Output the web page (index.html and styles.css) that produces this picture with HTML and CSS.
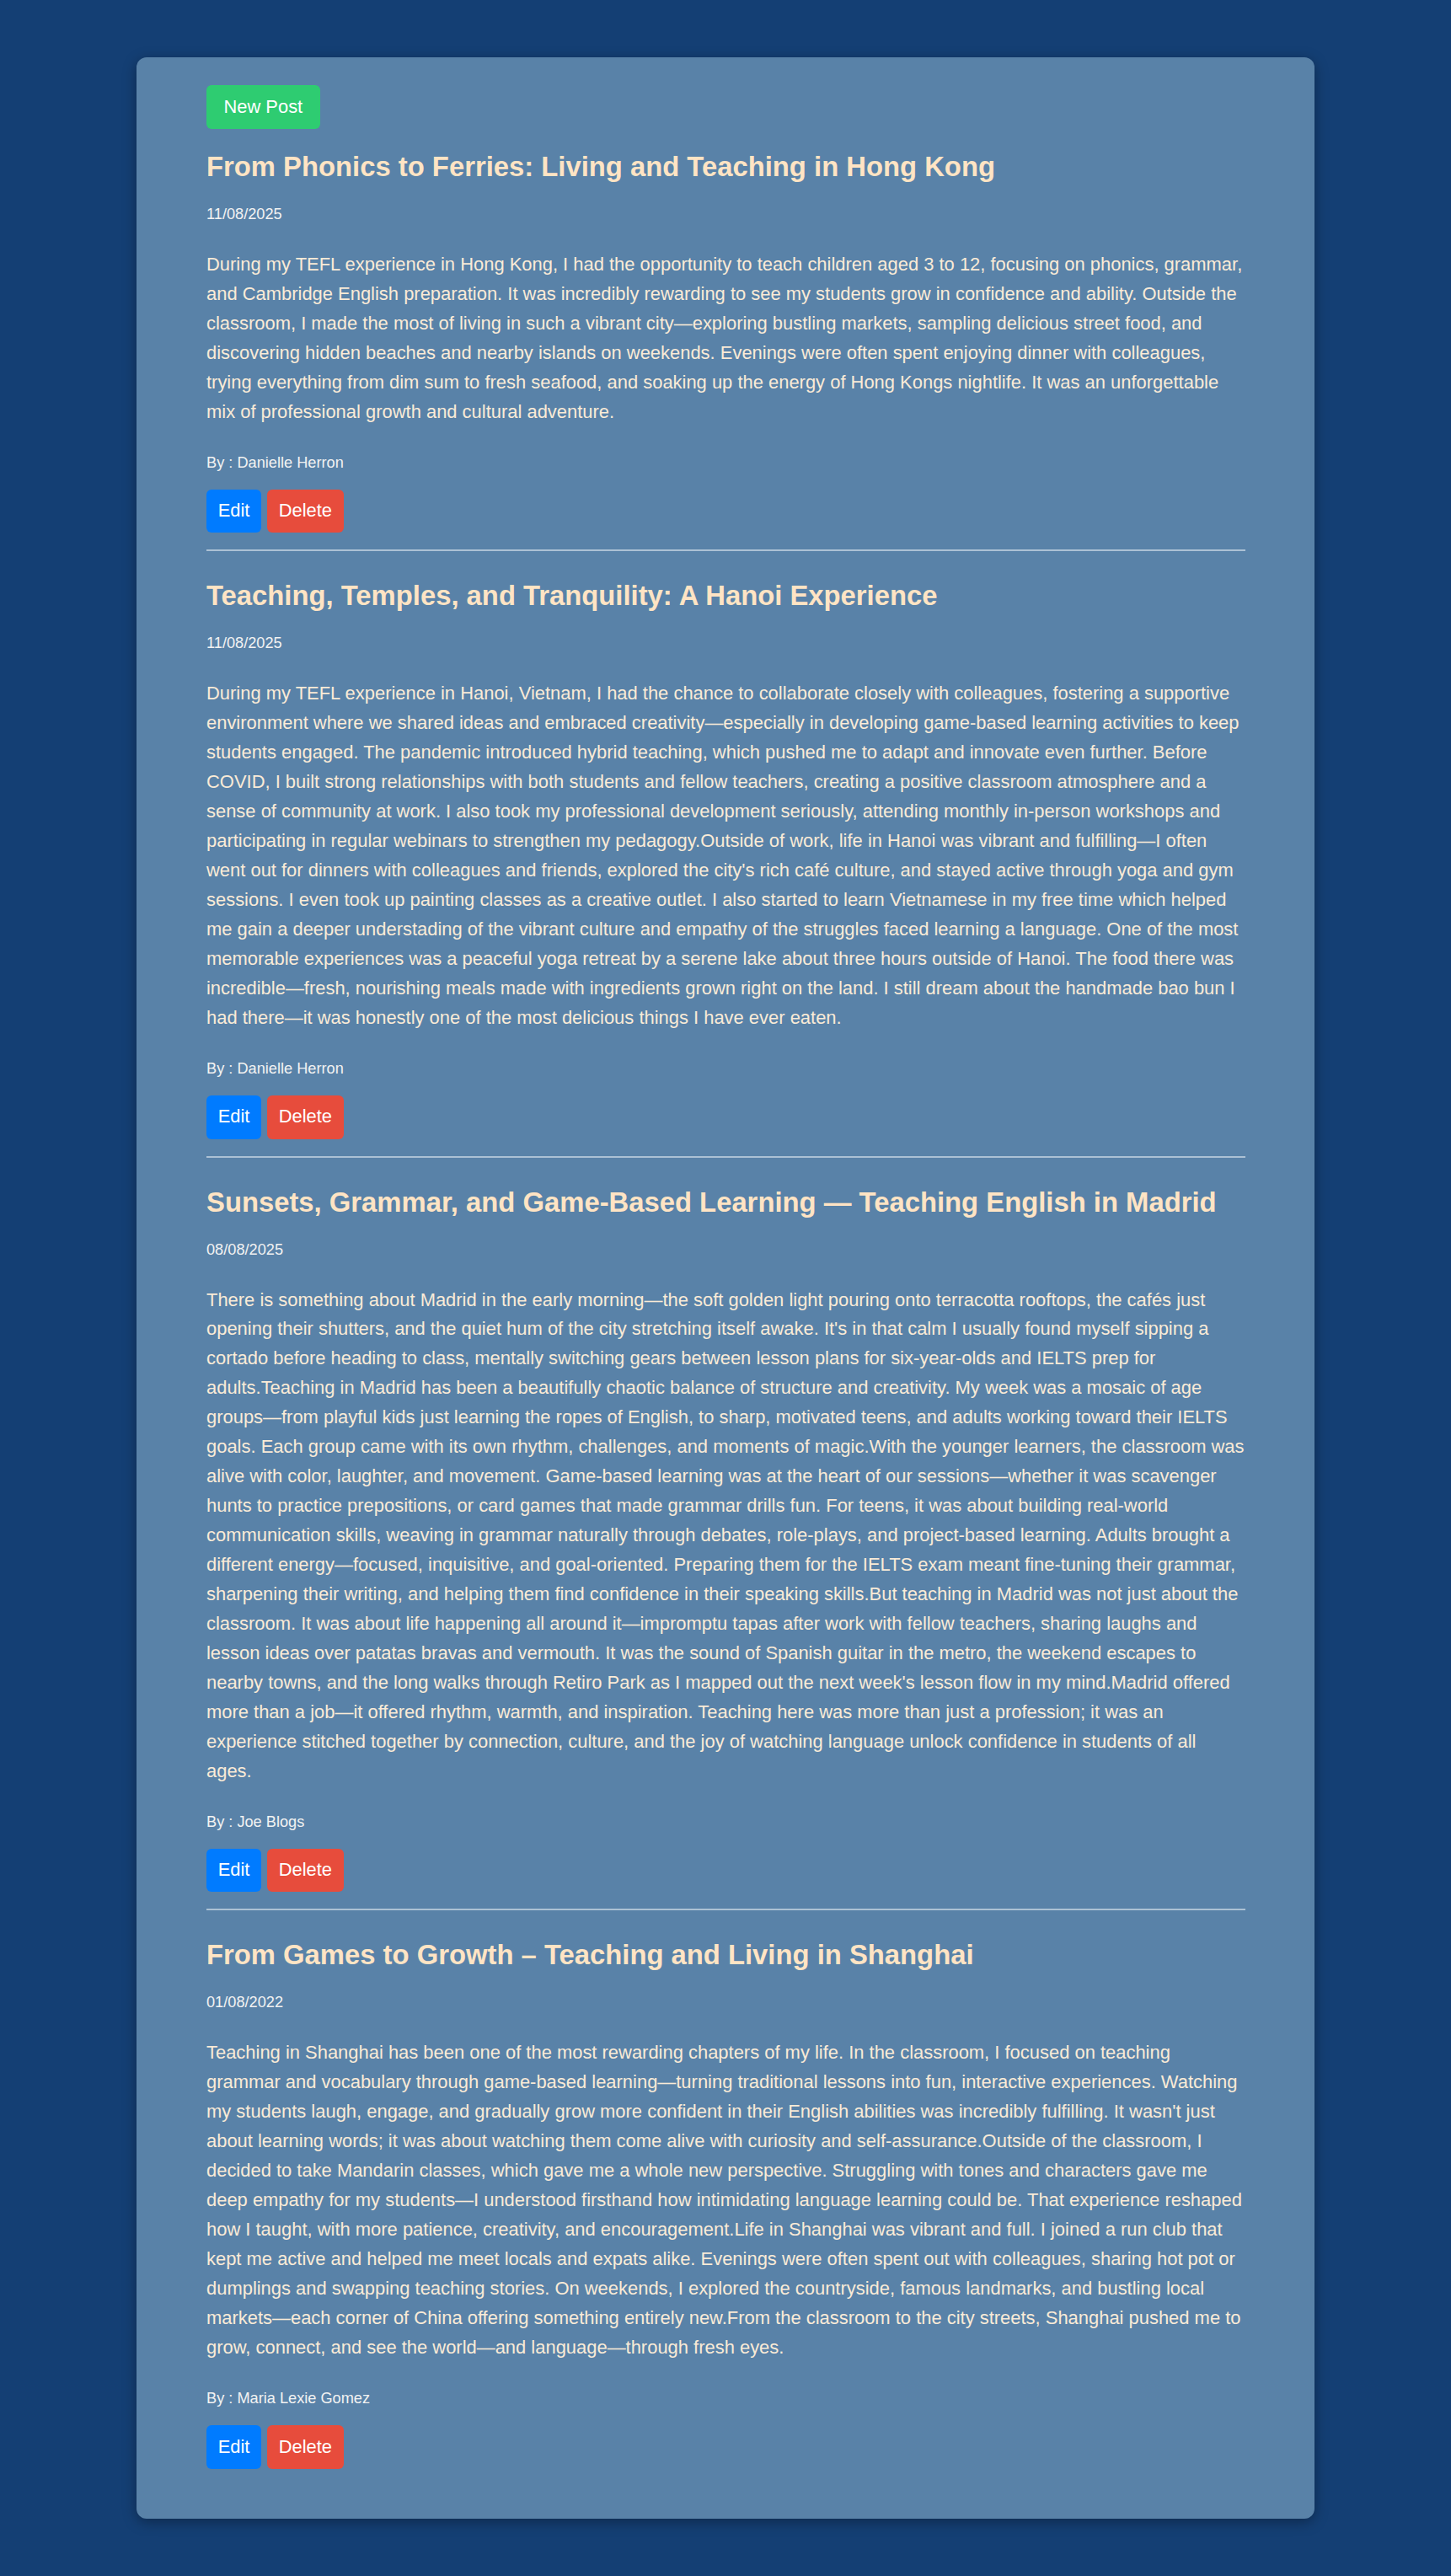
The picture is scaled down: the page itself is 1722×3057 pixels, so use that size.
FILE: index.html
```html
<!DOCTYPE html>
<html lang="en">
<head>
<meta charset="utf-8">
<title>TEFL Blog</title>
<link rel="stylesheet" href="styles.css">
</head>
<body>
<div class="page">
  <main class="card">
    <div class="toolbar">
      <button class="btn btn-new">New Post</button>
    </div>

    <article class="post">
      <h2 class="post-title">From Phonics to Ferries: Living and Teaching in Hong Kong</h2>
      <p class="post-date">11/08/2025</p>
      <p class="post-body">During my TEFL experience in Hong Kong, I had the opportunity to teach children aged 3 to 12, focusing on phonics, grammar, and Cambridge English preparation. It was incredibly rewarding to see my students grow in confidence and ability. Outside the classroom, I made the most of living in such a vibrant city—exploring bustling markets, sampling delicious street food, and discovering hidden beaches and nearby islands on weekends. Evenings were often spent enjoying dinner with colleagues, trying everything from dim sum to fresh seafood, and soaking up the energy of Hong Kongs nightlife. It was an unforgettable mix of professional growth and cultural adventure.</p>
      <p class="post-author">By : Danielle Herron</p>
      <div class="actions">
        <button class="btn btn-edit">Edit</button>
        <button class="btn btn-delete">Delete</button>
      </div>
    </article>

    <article class="post">
      <h2 class="post-title">Teaching, Temples, and Tranquility: A Hanoi Experience</h2>
      <p class="post-date">11/08/2025</p>
      <p class="post-body">During my TEFL experience in Hanoi, Vietnam, I had the chance to collaborate closely with colleagues, fostering a supportive environment where we shared ideas and embraced creativity—especially in developing game-based learning activities to keep students engaged. The pandemic introduced hybrid teaching, which pushed me to adapt and innovate even further. Before COVID, I built strong relationships with both students and fellow teachers, creating a positive classroom atmosphere and a sense of community at work. I also took my professional development seriously, attending monthly in-person workshops and participating in regular webinars to strengthen my pedagogy.Outside of work, life in Hanoi was vibrant and fulfilling—I often went out for dinners with colleagues and friends, explored the city's rich café culture, and stayed active through yoga and gym sessions. I even took up painting classes as a creative outlet. I also started to learn Vietnamese in my free time which helped me gain a deeper understading of the vibrant culture and empathy of the struggles faced learning a language. One of the most memorable experiences was a peaceful yoga retreat by a serene lake about three hours outside of Hanoi. The food there was incredible—fresh, nourishing meals made with ingredients grown right on the land. I still dream about the handmade bao bun I had there—it was honestly one of the most delicious things I have ever eaten.</p>
      <p class="post-author">By : Danielle Herron</p>
      <div class="actions">
        <button class="btn btn-edit">Edit</button>
        <button class="btn btn-delete">Delete</button>
      </div>
    </article>

    <article class="post">
      <h2 class="post-title">Sunsets, Grammar, and Game-Based Learning — Teaching English in Madrid</h2>
      <p class="post-date">08/08/2025</p>
      <p class="post-body">There is something about Madrid in the early morning—the soft golden light pouring onto terracotta rooftops, the cafés just opening their shutters, and the quiet hum of the city stretching itself awake. It's in that calm I usually found myself sipping a cortado before heading to class, mentally switching gears between lesson plans for six-year-olds and IELTS prep for adults.Teaching in Madrid has been a beautifully chaotic balance of structure and creativity. My week was a mosaic of age groups—from playful kids just learning the ropes of English, to sharp, motivated teens, and adults working toward their IELTS goals. Each group came with its own rhythm, challenges, and moments of magic.With the younger learners, the classroom was alive with color, laughter, and movement. Game-based learning was at the heart of our sessions—whether it was scavenger hunts to practice prepositions, or card games that made grammar drills fun. For teens, it was about building real-world communication skills, weaving in grammar naturally through debates, role-plays, and project-based learning. Adults brought a different energy—focused, inquisitive, and goal-oriented. Preparing them for the IELTS exam meant fine-tuning their grammar, sharpening their writing, and helping them find confidence in their speaking skills.But teaching in Madrid was not just about the classroom. It was about life happening all around it—impromptu tapas after work with fellow teachers, sharing laughs and lesson ideas over patatas bravas and vermouth. It was the sound of Spanish guitar in the metro, the weekend escapes to nearby towns, and the long walks through Retiro Park as I mapped out the next week's lesson flow in my mind.Madrid offered more than a job—it offered rhythm, warmth, and inspiration. Teaching here was more than just a profession; it was an experience stitched together by connection, culture, and the joy of watching language unlock confidence in students of all ages.</p>
      <p class="post-author">By : Joe Blogs</p>
      <div class="actions">
        <button class="btn btn-edit">Edit</button>
        <button class="btn btn-delete">Delete</button>
      </div>
    </article>

    <article class="post">
      <h2 class="post-title">From Games to Growth – Teaching and Living in Shanghai</h2>
      <p class="post-date">01/08/2022</p>
      <p class="post-body">Teaching in Shanghai has been one of the most rewarding chapters of my life. In the classroom, I focused on teaching grammar and vocabulary through game-based learning—turning traditional lessons into fun, interactive experiences. Watching my students laugh, engage, and gradually grow more confident in their English abilities was incredibly fulfilling. It wasn't just about learning words; it was about watching them come alive with curiosity and self-assurance.Outside of the classroom, I decided to take Mandarin classes, which gave me a whole new perspective. Struggling with tones and characters gave me deep empathy for my students—I understood firsthand how intimidating language learning could be. That experience reshaped how I taught, with more patience, creativity, and encouragement.Life in Shanghai was vibrant and full. I joined a run club that kept me active and helped me meet locals and expats alike. Evenings were often spent out with colleagues, sharing hot pot or dumplings and swapping teaching stories. On weekends, I explored the countryside, famous landmarks, and bustling local markets—each corner of China offering something entirely new.From the classroom to the city streets, Shanghai pushed me to grow, connect, and see the world—and language—through fresh eyes.</p>
      <p class="post-author">By : Maria Lexie Gomez</p>
      <div class="actions">
        <button class="btn btn-edit">Edit</button>
        <button class="btn btn-delete">Delete</button>
      </div>
    </article>
  </main>
</div>
</body>
</html>
```

FILE: styles.css
```css
html, body {
  margin: 0;
  padding: 0;
}

body {
  background: #143f74;
  font-family: "Liberation Sans", Arial, Helvetica, sans-serif;
}

.page {
  padding: 68px 0 69px;
}

.card {
  box-sizing: border-box;
  width: 1398px;
  margin: 0 auto;
  padding: 33px 82px 59px 83px;
  background: #5982a8;
  border-radius: 12px;
  box-shadow: 0 4px 16px rgba(0, 0, 0, 0.35);
}

.toolbar {
  display: flex;
}

.btn {
  display: inline-block;
  border: none;
  border-radius: 6px;
  color: #ffffff;
  font-family: "Liberation Sans", Arial, Helvetica, sans-serif;
  font-size: 21.9px;
  line-height: 24.5px;
  padding: 13.65px 20.5px;
  cursor: pointer;
}

.btn-new {
  background: #2ecc71;
}

.btn-edit {
  background: #007bff;
  padding: 13.65px;
}

.btn-delete {
  background: #e74c3c;
  padding: 13.65px;
}

.post {
  padding: 34px 0 20px;
  border-bottom: 2px solid rgba(255, 255, 255, 0.5);
}

.toolbar + .post {
  padding-top: 26px;
}

.post:last-child {
  border-bottom: none;
  padding-bottom: 0;
}

.post-title {
  margin: 0;
  font-size: 32.8px;
  line-height: 38px;
  font-weight: bold;
  color: #ffe4c4;
}

.post-date {
  margin: 27px 0 0;
  font-size: 18.2px;
  line-height: 21px;
  color: #f2f2f2;
}

.post-body {
  margin: 32px 0 0;
  font-size: 21.945px;
  line-height: 34.96px;
  color: #faebd7;
}

.post-author {
  margin: 32px 0 0;
  font-size: 18.2px;
  line-height: 21px;
  color: #f2f2f2;
}

.actions {
  display: flex;
  gap: 7px;
  margin-top: 21px;
}
```
